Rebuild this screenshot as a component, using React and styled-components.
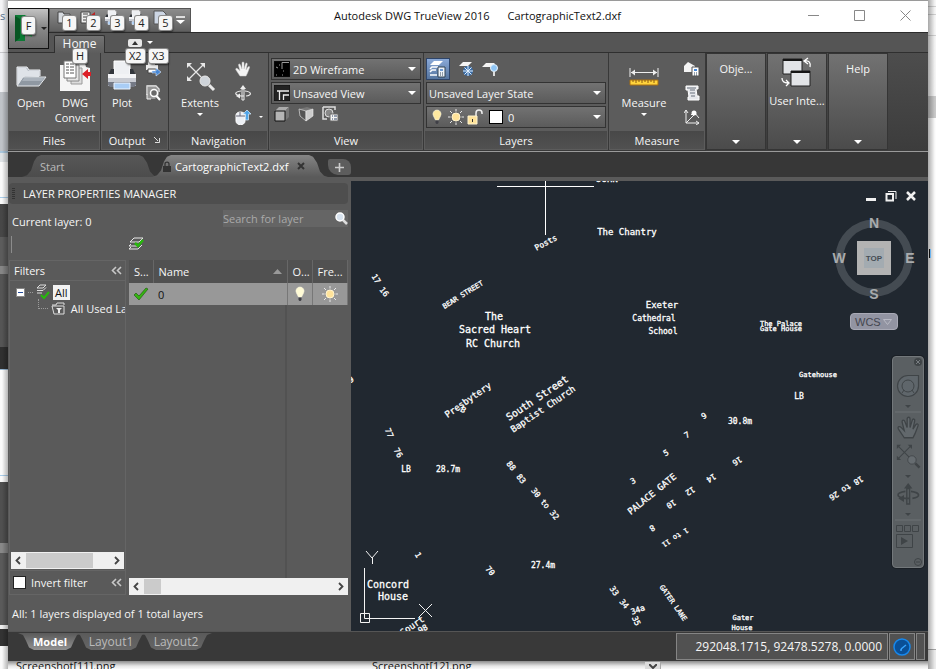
import React from "react";
import styled, { createGlobalStyle, css } from "styled-components";

const Global = createGlobalStyle`
  *, *::before, *::after { box-sizing: border-box; }
  body { margin: 0; background: #f3f3f3; overflow: hidden; }
  body, button, input, select, table { font: 11px/15px "Open Sans", "Noto Sans", sans-serif; color: #f6f6f6; }
  button { background: none; border: 0; padding: 0; }
  svg { display: block; flex: none; }
`;

/* ---------- desktop behind the window ---------- */
const Desktop = styled.div`
  display: grid;
  grid-template: 1fr 8px / 8px 1fr 8px;
  height: 100vh;
`;
const LeftDesk = styled.div`
  grid-row: 1 / 3;
  overflow: hidden;
  padding-top: 8px;
  color: #56708c;
  background:
    linear-gradient(90deg, transparent 2px, rgba(0, 0, 0, 0.28)),
    linear-gradient(#f4f4f6 0 52px, #c8c8cc 52px 53px, #f0f1f4 53px 92px, #bfc3c8 92px 151px, #a9c6dc 151px 153px, #dfe3e6 153px 162px, #fafafa 162px 197px, #a9cdea 197px 198px, #fafafa 198px 204px, #474747 204px 237px, #5c5c5c 237px 266px, #868686 266px 274px, #555 274px 347px, #303030 347px 369px, #98b8d4 369px 370px, #fafafa 370px 475px, #a9cdea 475px 476px, #fafafa 476px 482px, #505050 482px 543px, #888 543px 553px, #5a5a5a 553px 625px, #eee 625px 629px, #333 629px 646px, #fafafa 646px);
`;
const RightDesk = styled.div`
  grid-area: 1 / 3 / 3 / 4;
  background:
    linear-gradient(90deg, rgba(0, 0, 0, 0.32), transparent 7px),
    linear-gradient(#f6f6f6 0 6px, #cfcfcf 6px 7px, #f6f6f6 7px 14px, #cfcfcf 14px 15px, #f6f6f6 15px 35px, #d0d0d0 35px 36px, #f5f5f5 36px 96px, #c9c9c9 96px 118px, #fcfcfc 118px 649px, #a5a5a5 649px 650px, #ececec 650px);
`;
const Caret = styled.div`
  width: 2px;
  height: 9px;
  margin: 249px 0 0 1px;
  background: linear-gradient(90deg, #111 1px, #6db4ee 1px);
`;
const BottomDesk = styled.div`
  grid-area: 2 / 2;
  display: grid;
  grid-template-columns: 356px 281px 16px 1fr;
  align-items: end;
  overflow: hidden;
  height: 8px;
  color: #111;
  background: linear-gradient(#8c8c8c, #e6e6e6 5px, #fafafa);
  span { padding-left: 8px; line-height: 9px; }
`;
const DeskScroll = styled.div`
  display: grid;
  place-items: center;
  height: 8px;
  background: #dcdcdc;
  border-right: 1px solid #a8a8a8;
`;

/* ---------- window frame ---------- */
const Window = styled.main`
  position: relative;
  display: grid;
  grid-template-rows: 33px 20px 99px 25px 4px minmax(0, 1fr) 30px;
  min-width: 0;
  min-height: 0;
  background: #5a5a5a;
`;
const TitleBar = styled.header`
  display: flex;
  align-items: stretch;
  color: #111;
  background: #fff;
  border-top: 1px solid #9a9a9a;
  border-bottom: 1px solid #2c2c2c;
`;
const Quick = styled.nav`
  display: flex;
  align-items: center;
  width: 142px;
  height: 24px;
  margin: 7px 0 0 41px;
  padding-left: 6px;
  border: 1px solid #555;
  background: linear-gradient(#8c8c8c, #606060);
`;
const QuickButton = styled.button`
  position: relative;
  width: 24px;
  height: 20px;
  display: grid;
  place-items: start;
`;
const Title = styled.h1`
  flex: 1;
  display: flex;
  justify-content: center;
  gap: 18px;
  margin: 0;
  padding: 7px 26px 0 0;
  font: inherit;
  color: #111;
  white-space: nowrap;
`;
const Control = styled.button`
  width: 46px;
  height: 28px;
  display: grid;
  place-items: center;
`;
const AppButton = styled.button`
  position: absolute;
  left: 0;
  top: 8px;
  width: 41px;
  height: 41px;
  display: flex;
  align-items: center;
  gap: 3px;
  padding-left: 6px;
  border: 1px solid #111;
  background: linear-gradient(#c2c2c2, #8a8a8a 45%, #6b6b6b);
  z-index: 2;
`;
const KeyTip = styled.kbd`
  position: absolute;
  left: ${(p) => p.$x}px;
  top: ${(p) => p.$y}px;
  min-width: 13px;
  height: ${(p) => (p.$tall ? 17 : 14)}px;
  padding: 0 3px;
  display: grid;
  place-items: center;
  font: 11px/12px "Open Sans", sans-serif;
  color: #222;
  background: #f6f6f6;
  border-radius: 2px;
  box-shadow: 0 0 0 1px #8b8b8b, 1px 2px 2px rgba(0, 0, 0, 0.6);
  z-index: 3;
`;
const TabRow = styled.nav`
  display: flex;
  align-items: flex-end;
  padding-left: 46px;
  background: #555;
  border-bottom: 1px solid #2f2f2f;
`;
const HomeTab = styled.button`
  position: relative;
  width: 51px;
  height: 18px;
  margin-bottom: -1px;
  padding-bottom: 2px;
  border: 1px solid #303030;
  border-bottom: 0;
  border-radius: 2px 2px 0 0;
  font-size: 12px;
  background: linear-gradient(#737373, #5d5d5d);
`;
const MiniTools = styled.div`
  position: relative;
  display: flex;
  align-items: center;
  gap: 5px;
  margin-left: 23px;
  height: 19px;
`;
const MiniButton = styled.button`
  width: 14px;
  height: 8px;
  display: grid;
  place-items: center;
  border-radius: 2px;
  background: #e8e8e8;
`;

/* ---------- ribbon ---------- */
const Ribbon = styled.div`
  display: flex;
  align-items: stretch;
  background: linear-gradient(#4d4d4d, #3c3c3c);
  border-bottom: 1px solid #9a9a9a;
`;
const Panel = styled.section`
  flex: none;
  display: grid;
  grid-template-rows: 1fr 18px;
  width: ${(p) => p.$w}px;
  padding: 0 1px 1px;
  border-right: 1px solid #383838;
  border-bottom: 1px solid #383838;
  background: #5c5c5c;
`;
const PanelBody = styled.div`
  display: flex;
  min-height: 0;
  padding: ${(p) => p.$pad || "5px 3px 0"};
  gap: ${(p) => p.$gap || 0}px;
`;
const PanelTitle = styled.h2`
  position: relative;
  margin: 0;
  display: flex;
  justify-content: center;
  align-items: center;
  gap: 9px;
  font: inherit;
  color: #f6f6f6;
  background: linear-gradient(#484848, #515151);
`;
const BigButton = styled.button`
  display: flex;
  flex-direction: column;
  align-items: center;
  width: ${(p) => p.$w}px;
  svg:first-child { margin-bottom: 3px; }
  svg:last-child:not(:first-child) { margin-top: 3px; }
`;
const Stack = styled.div`
  display: flex;
  flex-direction: column;
  gap: 8px;
  padding-top: 1px;
`;
const SmallRow = styled.div`
  display: flex;
  align-items: center;
  gap: 8px;
  padding-left: ${(p) => p.$indent || 0}px;
`;
const IconButton = styled.button`
  display: grid;
  place-items: center;
  ${(p) => p.$on && css`
    width: 24px;
    height: 22px;
    border: 1px solid #2e4468;
    background: linear-gradient(#8aa9d8, #56759f);
  `}
`;
const Controls = styled.div`
  flex: 1;
  min-width: 0;
  display: flex;
  flex-direction: column;
  gap: 2px;
`;
const Combo = styled.label`
  display: flex;
  align-items: center;
  gap: 3px;
  height: 22px;
  padding: 0 4px 0 2px;
  border: 1px solid #333;
  background: linear-gradient(#727272, #5b5b5b);
  select {
    flex: 1;
    min-width: 0;
    height: 20px;
    padding: 0;
    border: 0;
    appearance: none;
    background: none;
  }
`;
const Swatch = styled.span`
  width: 14px;
  height: 14px;
  margin: 0 2px 0 3px;
  background: #fff;
  border: 1px solid #000;
`;
const FoldedPanel = styled.button`
  flex: none;
  display: flex;
  flex-direction: column;
  align-items: center;
  justify-content: space-between;
  width: 60px;
  margin: 0 1px 1px 0;
  padding: 3px 0 5px;
  border: 1px solid #353535;
  background: linear-gradient(#727272, #4b4b4b);
  white-space: nowrap;
`;
const FoldedLabel = styled.span`
  display: flex;
  flex-direction: column;
  align-items: center;
  gap: 4px;
  padding-top: ${(p) => p.$top || 0}px;
`;

/* ---------- document tabs ---------- */
const DocTabs = styled.nav`
  display: flex;
  align-items: flex-end;
  padding-left: 14px;
  background: #373737;
`;
const DocTab = styled.button`
  display: flex;
  align-items: center;
  gap: 4px;
  height: 22px;
  width: ${(p) => p.$w}px;
  padding-left: ${(p) => (p.$active ? 11 : 18)}px;
  margin-right: -6px;
  color: ${(p) => (p.$active ? "#fff" : "#bbb")};
  background: ${(p) => (p.$active ? "linear-gradient(#858585, #5a5a5a)" : "linear-gradient(#575757, #4c4c4c)")};
  clip-path: polygon(0 100%, 5px 92%, 9px 70%, 12px 30%, 15px 8%, 19px 0, calc(100% - 19px) 0, calc(100% - 15px) 8%, calc(100% - 11px) 35%, calc(100% - 8px) 75%, calc(100% - 4px) 94%, 100% 100%);
  white-space: nowrap;
`;
const NewTab = styled.button`
  display: grid;
  place-items: center;
  width: 23px;
  height: 16px;
  margin: 0 0 2px 6px;
  border-radius: 2px 8px 3px 10px;
  background: #5d5d5d;
`;

/* ---------- layer palette ---------- */
const Work = styled.div`
  grid-row: 6;
  display: grid;
  grid-template-columns: 343px minmax(0, 1fr);
  min-height: 0;
`;
const Palette = styled.aside`
  display: flex;
  flex-direction: column;
  min-height: 0;
  padding: 2px 3px 2px 1px;
`;
const PaletteTitle = styled.h2`
  display: flex;
  align-items: center;
  gap: 8px;
  height: 21px;
  margin: 0 0 6px;
  padding-left: 3px;
  font: inherit;
  color: #f6f6f6;
  background: #4e4e4e;
  border-radius: 4px;
  white-space: nowrap;
`;
const Grip = styled.span`
  width: 3px;
  height: 11px;
  background: repeating-linear-gradient(#333 0 1px, transparent 1px 2px);
`;
const Between = styled.div`
  display: flex;
  justify-content: space-between;
  align-items: flex-start;
  padding-left: 3px;
`;
const Current = styled.span`
  padding-top: 4px;
`;
const Search = styled.label`
  display: flex;
  align-items: center;
  width: 125px;
  height: 17px;
  background: #656565;
  input {
    flex: 1;
    min-width: 0;
    height: 17px;
    padding: 0;
    border: 0;
    outline: 0;
    background: none;
    &::placeholder { color: #a9a9a9; opacity: 1; }
  }
`;
const PaletteTools = styled.div`
  display: flex;
  align-items: center;
  height: 17px;
  margin: 7px 0 7px 2px;
  padding-left: 116px;
  border-left: 1px solid #8c8c8c;
`;
const Split = styled.div`
  flex: 1;
  display: grid;
  grid-template-columns: 117px minmax(0, 1fr);
  gap: 3px;
  min-height: 0;
`;
const Filters = styled.section`
  display: flex;
  flex-direction: column;
  min-width: 0;
  border: 1px solid #656565;
`;
const FiltersHead = styled.header`
  display: flex;
  justify-content: space-between;
  align-items: center;
  height: 20px;
  padding: 0 3px 0 4px;
  border-bottom: 1px solid #656565;
`;
const Tree = styled.ul`
  flex: 1;
  margin: 0;
  padding: 3px 0 0 6px;
  list-style: none;
  overflow: hidden;
  white-space: nowrap;
`;
const TreeItem = styled.li`
  display: flex;
  align-items: center;
  gap: 3px;
  height: 16px;
  padding-left: ${(p) => p.$indent || 0}px;
`;
const Dots = styled.span`
  flex: none;
  width: ${(p) => p.$w}px;
  height: ${(p) => p.$h || 1}px;
  border-bottom: 1px dotted #9a9a9a;
  ${(p) => p.$h && "border-left: 1px dotted #9a9a9a; margin-bottom: 9px;"}
`;
const Picked = styled.span`
  padding: 0 2px;
  color: #111;
  background: #f2f2f2;
`;
const FilterFoot = styled.label`
  display: flex;
  align-items: center;
  gap: 5px;
  height: 24px;
  padding: 0 3px;
  border-top: 1px solid #656565;
  input {
    width: 13px;
    height: 13px;
    margin: 0;
    appearance: none;
    background: #fff;
    border: 1px solid #222;
  }
  svg { margin-left: auto; }
`;
const Scroll = styled.div`
  display: flex;
  align-items: center;
  justify-content: space-between;
  height: 17px;
  padding: 0 4px;
  margin: ${(p) => p.$m || 0};
  background: #f0f0f0;
`;
const Thumb = styled.span`
  width: ${(p) => p.$w}px;
  height: 15px;
  margin: 0 auto 0 5px;
  background: #cbcbcb;
`;
const Layers = styled.section`
  display: flex;
  flex-direction: column;
  min-width: 0;
`;
const LayerTable = styled.table`
  width: 100%;
  border-collapse: collapse;
  table-layout: fixed;
  flex: none;
  th {
    height: 23px;
    padding: 0 5px;
    text-align: left;
    font-weight: 400;
    white-space: nowrap;
    background: #515151;
    border-right: 1px solid #676767;
  }
  td {
    height: 22px;
    padding: 0 5px;
    color: #111;
    background: #989898;
  }
  td:nth-child(n + 2) { border-right: 1px solid #777; }
`;
const HeadFlex = styled.span`
  display: flex;
  justify-content: space-between;
  align-items: center;
`;
const Center = styled.span`
  display: grid;
  place-items: center;
  margin: 0 -4px;
`;
const TableRest = styled.div`
  flex: 1;
  display: grid;
  grid-template-columns: 158px 1fr;
  span:first-child { border-right: 2px solid #525252; }
`;
const Summary = styled.p`
  margin: 11px 0 8px 3px;
`;

/* ---------- drawing area ---------- */
const Canvas = styled.section`
  position: relative;
  overflow: hidden;
  background: #212830;
`;
const Map = styled.svg`
  width: 100%;
  height: 100%;
  text {
    font-family: "DejaVu Sans Mono", "Liberation Mono", monospace;
    fill: #fff;
    stroke: #fff;
    stroke-width: 0.3px;
    text-anchor: middle;
    dominant-baseline: central;
  }
`;
const ViewControls = styled.div`
  position: absolute;
  top: 9px;
  right: 11px;
  display: flex;
  gap: 8px;
`;
const Cube = styled.div`
  position: absolute;
  top: 34px;
  right: 12px;
`;
const Wcs = styled.button`
  position: absolute;
  top: 132px;
  right: 30px;
  display: flex;
  align-items: center;
  justify-content: space-between;
  width: 48px;
  height: 17px;
  padding: 0 5px 0 4px;
  font: 11px/14px "Liberation Sans", Arial, sans-serif;
  color: #44464f;
  background: #9294a2;
  border: 1px solid #a9aab6;
  border-radius: 4px;
`;
const NavBar = styled.nav`
  position: absolute;
  top: 175px;
  right: 4px;
  width: 32px;
  border: 1px solid #73787b;
  border-radius: 4px;
  background: #5a5f62;
  box-shadow: 0 0 0 1px #1a1f25;
`;

/* ---------- status bar ---------- */
const Status = styled.footer`
  grid-row: 7;
  display: flex;
  justify-content: space-between;
  padding: 1px 3px 1px 10px;
  background: #393939;
  border-top: 1px solid #555;
`;
const LayoutTabs = styled.div`
  display: flex;
  align-items: flex-start;
`;
const LayoutTab = styled.button`
  height: 17px;
  width: ${(p) => p.$w}px;
  margin-right: -7px;
  font-size: ${(p) => (p.$active ? 11 : 12)}px;
  font-weight: ${(p) => (p.$active ? 700 : 400)};
  color: ${(p) => (p.$active ? "#fff" : "#bbb")};
  background: ${(p) => (p.$active ? "linear-gradient(#5a5a5a, #929292)" : "linear-gradient(#5a5a5a, #666)")};
  clip-path: polygon(0 0, 5px 12%, 8px 45%, 11px 85%, 16px 100%, calc(100% - 16px) 100%, calc(100% - 11px) 85%, calc(100% - 8px) 45%, calc(100% - 5px) 12%, 100% 0);
`;
const StatusCells = styled.div`
  display: flex;
  gap: 1px;
`;
const Cell = styled.div`
  display: flex;
  align-items: center;
  justify-content: ${(p) => (p.$end ? "flex-end" : "center")};
  width: ${(p) => p.$w}px;
  padding-right: ${(p) => (p.$end ? 5 : 0)}px;
  font-size: 12px;
  background: #515151;
  border: 1px solid #858585;
`;

/* ---------- icons ---------- */
const Svg = ({ w, h = w, children, ...rest }) => (
  <svg width={w} height={h} viewBox={`0 0 ${w} ${h}`} fill="none" aria-hidden="true" {...rest}>{children}</svg>
);
const Down = ({ w = 8, color = "#fff" }) => (
  <Svg w={w} h={w / 2}><path d={`M0 0H${w}L${w / 2} ${w / 2}Z`} fill={color} /></Svg>
);
const Chevrons = () => (
  <Svg w={11} h={9}><path d="M5 1 1.5 4.5 5 8M10 1 6.500 4.500 10 8" stroke="#c8c8c8" strokeWidth="1.600" /></Svg>
);
const Chev = ({ right }) => (
  <Svg w={6} h={9}><path d={right ? "M1 1 4.5 4.500 1 8" : "M5 1 1.5 4.5 5 8"} stroke="#444" strokeWidth="1.800" /></Svg>
);
const Folder = () => (
  <Svg w={32}>
    <path d="M2 25V7h10l2 3h11v6" fill="#b9bfc7" stroke="#eef0f3" />
    <path d="M3 8h8l2 3h11v6L10 16 3 25Z" fill="#dfe3e8" />
    <path d="M8 17h23l-7 9H2Z" fill="#8f98a2" stroke="#e6e9ec" />
    <path d="m9 18 20 0-2 3H7Z" fill="#aab2bb" />
  </Svg>
);
const Convert = () => (
  <Svg w={32}>
    <path d="M1 5h4l1-2h20l1 4 4 1v23H1Z" fill="#f5f5f5" />
    <path d="M12 8h11v16H12Z" fill="#ddd" stroke="#999" />
    <path d="M8 5h12v16H8Z" fill="#e7e7e7" stroke="#888" />
    <path d="M5 1h12v17H5Z" fill="#fff" stroke="#777" />
    <path d="M7 4h3m1 0h4M7 7h3m1 0h4M7 10h3m1 0h4M7 13h3m1 0h4" stroke="#555" />
    <path d="M23 14l6-5v3h3v4h-3v3Z" fill="#dc2028" />
  </Svg>
);
const Printer = ({ w = 32 }) => (
  <svg width={w} height={w} viewBox="0 0 32 32" fill="none" aria-hidden="true">
    <path d="m8 1 14 0 2 2v12H8Z" fill="#eef0f3" stroke="#fff" />
    <path d="M5 9h3v5h16V9h3l3 7H2Z" fill="#32363c" />
    <path d="M2 14h28v12H2Z" fill="#c9ccd3" />
    <path d="M2 14h28v4H2Z" fill="#f3f4f6" />
    <path d="M2 22h28v3l-2 2H4l-2-2Z" fill="#747985" />
    <path d="M8 23h16v6H8Z" fill="#a9cdf5" stroke="#eef6ff" />
  </svg>
);
const PrintArrow = () => (
  <Svg w={16}>
    <path d="M3 4V1h7v3" fill="#ddd" /><path d="M1 4h12v5H1Z" fill="#ececec" /><path d="M3 8h8v4H3Z" fill="#fff" stroke="#444" />
    <path d="M7 10h4V7l5 4-5 4v-3H7Z" fill="#4787d4" stroke="#dcebff" strokeWidth=".6" />
  </Svg>
);
const Preview = () => (
  <Svg w={16}>
    <path d="M2 10V1h9l3 3v3" stroke="#f2f2f2" strokeWidth="1.300" /><path d="M2 1h9l3 3v6l-4 4H2Z" fill="#bdbdbd" fillOpacity=".6" />
    <path d="M2 9v5h4" stroke="#f2f2f2" />
    <circle cx="9" cy="8" r="3.500" fill="#6a6a6a" stroke="#fff" strokeWidth="1.500" /><path d="m11.500 11 3.500 4" stroke="#fff" strokeWidth="2" />
  </Svg>
);
const ExtentsShape = ({ c = "#e8e8e8", glass = "#cfd4da" }) => (
  <>
    <path d="M2 2 18 18M18 2 2 18" stroke={c} strokeWidth="1.200" />
    <path d="M1 1h5L1 6ZM19 1v5l-5-5ZM1 19v-5l5 5Z" fill={c} />
    <path d="m23 23 5 5" stroke={c} strokeWidth="3" />
    <circle cx="19" cy="19" r="5" fill={glass} stroke={c} />
  </>
);
const Extents = () => <Svg w={32}><g transform="translate(2 2)"><ExtentsShape /></g></Svg>;
const handPath = "M5 15 1 9c-1-2 1-2 2-1l2 2-1.500-6c0-1.500 1.500-1.500 2 0L7 8V2c0-1.500 2-1.500 2 0v6l1.500-5c.5-1.500 2-1 1.700.3L11 9l2-3c.8-1 2-.5 1.500.8L12.500 12 11 15Z";
const Hand = () => <Svg w={16}><path d={handPath} fill="#f4f4f4" stroke="#ccc" strokeWidth=".5" /></Svg>;
const orbit = (c) => (
  <>
    <path d="M7 4h2v11H7Z" stroke={c} /><path d="m5 4 3-4 3 4Z" fill={c} />
    <path d="M6 6c-7 1-7 4 0 5h3M10 6c7 1 7 4 1 5" stroke={c} strokeWidth="1.200" /><path d="M5 8.500v5l-4-2.500Z" fill={c} />
  </>
);
const Orbit = () => <Svg w={16}>{orbit("#eee")}</Svg>;
const Mouse = () => (
  <Svg w={16}>
    <path d="M1 6c0-4 9-4 9 0v6c0 5-9 5-9 0Z" fill="#eceff4" stroke="#fff" /><path d="M1 7h9M5 3v4" stroke="#667" />
    <path d="m12 1 4 4h-2.500v6h-3V5H8Z" fill="#4fa4e8" stroke="#d6ecff" strokeWidth=".7" />
  </Svg>
);
const ViewTile = ({ wire }) => (
  <Svg w={16}>
    <path d="M0 0h16v16H0Z" fill={wire ? "#000" : "#222"} stroke="#111" />
    {wire ? <path d="M8 8V1.500h7M2 6l2 1M2 14h1M8 14h1M9 10h1M5 4h1" stroke="#999" /> : <path d="M3 6h12M5.500 15V6M9.500 15v-5H15" stroke="#eee" strokeWidth="1.300" />}
  </Svg>
);
const BoxIcon = ({ persp }) => (
  <Svg w={16}>
    {persp ? (
      <><path d="m1 3 8-2 6 2-7 2Z" fill="#777" /><path d="m1 3 7 2v10l-6-5Z" fill="#555" stroke="#ddd" strokeWidth=".7" /><path d="m8 5 7-2v7l-7 5Z" fill="#ccc" stroke="#eee" strokeWidth=".6" /></>
    ) : (
      <><path d="m1 5 4-4h10l-4 4Z" fill="#aaa" /><path d="m11 5 4-4v10l-4 4Z" fill="#777" /><path d="M1 5h10v10H1Z" fill="#b5b5b5" stroke="#111" /></>
    )}
  </Svg>
);
const ViewList = () => (
  <Svg w={17} h={16}>
    <path d="M1 1h12v3M1 1v12h4" stroke="#ddd" strokeWidth="1.500" /><circle cx="7" cy="7" r="4" fill="#888" stroke="#ddd" />
    <path d="M8 8h8v7H8Z" fill="#f4f4f4" stroke="#666" /><path d="M10 10h1m1 0h3M10 13h1m1 0h3" stroke="#346" />
  </Svg>
);
const LayerProps = () => (
  <Svg w={18}>
    <path d="m1 5 4-4h9l-4 4Z" fill="#fff" /><path d="m1 9 2-2h6M1 12l2-2h4M1 15h7" stroke="#fff" strokeWidth="1.500" />
    <path d="M9 7h7v10H9Z" fill="#eef3fa" stroke="#345" /><path d="M11 9h3v2h-3Z" fill="#6e9bd4" /><path d="M11 13h1m1 0h1m-3 2h1m1 0h1" stroke="#345" />
  </Svg>
);
const LayerFreeze = () => (
  <Svg w={16}>
    <path d="m1 5 4-4h9l-4 4Z" fill="#f4f4f4" /><circle cx="10" cy="10" r="5" fill="#3c6ea8" /><path d="M10 5v10M5 10h10M6.500 6.500l7 7M13.500 6.500l-7 7" stroke="#e2f1ff" />
  </Svg>
);
const LayerOff = () => (
  <Svg w={16}>
    <path d="m0 6 4-4h9l-4 4Z" fill="#f4f4f4" /><circle cx="12" cy="7" r="3.500" fill="#8fc5f5" stroke="#e6f4ff" /><path d="M12 11v4" stroke="#ddd" strokeWidth="2" />
  </Svg>
);
const Bulb = ({ pale }) => (
  <Svg w={16}>
    <path d="M8 1a4 4 0 0 1 3.500 6L9.500 11h-3L4.500 7A4 4 0 0 1 8 1Z" fill={pale ? "#fffbd6" : "#ffe9a0"} stroke="#fffbe2" strokeWidth=".6" /><path d="M6.500 11.500h3V14l-1 1h-1l-1-1Z" fill="#3f3f46" />
  </Svg>
);
const Sun = () => (
  <Svg w={16}>
    <path d="M8 0v2.500M8 13.500V16M0 8h2.500M13.500 8H16M2 2l2 2M14 14l-2-2M14 2l-2 2M2 14l2-2" stroke="#e8e8e8" />
    <circle cx="8" cy="8" r="4" fill="#ffe39a" stroke="#fff4cf" />
  </Svg>
);
const OpenLock = () => (
  <Svg w={16}><path d="M9 8V4c0-4 6-4 6 0v1" stroke="#eee" strokeWidth="1.500" /><path d="M1 7h9v8H1Z" fill="#ffe39a" stroke="#fff4cf" /><path d="M5.500 10v3" stroke="#333" /></Svg>
);
const Ruler = () => (
  <Svg w={30} h={32}>
    <path d="M1 8v9M29 8v9M2 12.500h26" stroke="#eee" /><path d="m2 12.500 4-3v6ZM28 12.500l-4-3v6Z" fill="#eee" />
    <path d="M1 20h28v5H1Z" fill="#ffd33c" stroke="#a96e10" /><path d="M4 20v2m3-2v3m3-3v2m3-2v3m3-3v2m3-2v3m3-3v2m3-2v3" stroke="#8a5a10" />
  </Svg>
);
const MeasureCalc = () => (
  <Svg w={16}><path d="m0 5 4-4 7 4v6H0Z" fill="#f4f4f4" /><path d="M8 6h7v9H8Z" fill="#fff" stroke="#555" /><path d="M10 8h3v2h-3Z" fill="#4688d8" /><path d="M10 12h1m1 0h1m-3 2h1m1 0h1" stroke="#345" /></Svg>
);
const Scroller = () => (
  <Svg w={16}><path d="M2 1h12v3h-2l1 7h2v4H4v-3h1L4 5H2Z" fill="#e6e8ec" stroke="#fff" /><path d="M6 5h5M6 8h5M7 11h4M3 3h9" stroke="#68707c" /></Svg>
);
const Axis = () => (
  <Svg w={16}><path d="M2 1v13h13M2 14l8-8M7 6l3-3 5 6" stroke="#eee" /><path d="m0 4 2-3 2 3M12 12l3 2-3 2" stroke="#eee" /><circle cx="10" cy="4" r="2.500" fill="#fff" /></Svg>
);
const Windows = () => (
  <Svg w={32}>
    <path d="M2 2h19v15H2Z" fill="#e2e4e7" stroke="#222" /><path d="M2 2h19v2H2Z" fill="#151515" />
    <path d="M10 14h19v15H10Z" fill="#e2e4e7" stroke="#222" /><path d="M10 14h19v2H10Z" fill="#151515" />
    <path d="M24 4c4-1 6 2 5 6M27 1l-4 3 4 3M1 21c0 4 2 5 6 5M5 23l3 3-3 3" stroke="#fff" strokeWidth="1.300" />
  </Svg>
);
const LogoF = () => <Svg w={23} h={28}><path d="M0 0h10v26H0Z" fill="#0d7a35" /><path d="m0 1 5 3v19l-5 4Z" fill="#075522" /><path d="m10 0 7 4v18l-7-3Z" fill="#2f9c52" /></Svg>;
const Lock = () => <Svg w={8} h={11}><path d="M2 5V3c0-2.500 4-2.500 4 0v2" stroke="#333" strokeWidth="1.300" /><path d="M0 5h8v6H0Z" fill="#333" /></Svg>;
const Glass = () => <Svg w={13}><path d="m8 8 4 4" stroke="#ddd" strokeWidth="2.500" /><circle cx="5" cy="5" r="4" fill="#d7e2ee" stroke="#fff" strokeWidth="1.500" /></Svg>;
const Check = () => <Svg w={16}><path d="m1 9 2-2 3 3 7-8 2 1-9 11Z" fill="#35b512" stroke="#245e12" strokeWidth=".7" /></Svg>;
const LayerCheck = () => (
  <Svg w={17} h={15}><path d="m2 5 4-4h9l-4 4ZM1 9l2-2M1 9h9l4-4M1 12l2-2M1 12h9l4-4" stroke="#e8e8e8" /><path d="m7 6 3 3 5-6" stroke="#27b80c" strokeWidth="2.500" /></Svg>
);
const TreeLayers = () => <Svg w={14} h={16}><path d="m1 4 3-3h6L7 4ZM1 6.500h6l3-3M1 9h5" stroke="#ddd" /><path d="m5 11 3 3 5-6" stroke="#27b80c" strokeWidth="2" /></Svg>;
const FilterFolder = () => <Svg w={14} h={13}><path d="M1 3h4l1-2h7v2M1 4h12v8H3Z" stroke="#ddd" /><path d="M5 6h6L9 8v3H7V8Z" fill="#eee" /></Svg>;
const Minus = () => <Svg w={9}><path d="M.5.5h8v8h-8Z" fill="#fff" stroke="#888" /><path d="M2 4.500h5" stroke="#234a9a" /></Svg>;

const NavIcons = () => {
  const c = "#3f4447";
  return (
    <Svg w={30} h={210}>
      <circle cx="25" cy="5" r="4" fill={c} /><path d="m23 3 4 4m0-4-4 4" stroke="#777c80" />
      <path d="M15 18.500h10.500V29A10.500 10.500 0 1 1 15 18.500Z" stroke={c} fill="#5f666b" strokeWidth="1.200" /><circle cx="15" cy="29" r="6" stroke={c} /><path d="m9 36 2-3m10 3-2-3" stroke={c} />
      <path d="M12 48h6l-3 3Z" fill={c} /><path d="M2 55h26M2 163h26" stroke="#6d7275" />
      <g transform="translate(4 59) scale(1.450)"><path d={handPath} stroke={c} strokeWidth=".9" fill="#62686c" /></g>
      <g transform="translate(3 87) scale(.84)"><ExtentsShape c={c} glass="#666c70" /></g>
      <path d="M12 118h6l-3 3Z" fill={c} />
      <g transform="translate(4 126) scale(1.400)">{orbit(c)}</g>
      <path d="M12 156h6l-3 3Z" fill={c} />
      <path d="M3.500 168.500h6v6h-6ZM11.500 168.500h6v6h-6ZM19.500 168.500h6v6h-6ZM3.500 177.500h16v13h-16Z" stroke={c} /><path d="m8 180 7 4-7 4Z" fill={c} />
      <circle cx="25" cy="205" r="3.500" stroke={c} /><path d="M23 205h4" stroke={c} />
    </Svg>
  );
};
const Compass = () => (
  <svg width="84" height="88" viewBox="0 0 84 88" role="img" aria-label="View cube, top">
    <circle cx="42" cy="43" r="34.500" fill="none" stroke="#444b52" strokeWidth="8" />
    <path d="M25 26h34v34H25Z" fill="#b3b3b3" /><path d="M32 33h20v20H32Z" fill="#a3abb1" />
    <g fontFamily="Liberation Sans, Arial, sans-serif" fontWeight="700" textAnchor="middle" fill="#a9abad">
      <text x="42" y="13" fontSize="14">N</text><text x="42" y="84" fontSize="14">S</text>
      <text x="7" y="48" fontSize="14">W</text><text x="78" y="48" fontSize="14">E</text>
      <text x="42" y="46" fontSize="8" fill="#454d55">TOP</text>
    </g>
  </svg>
);

/* label, centre x, centre y, rotation, size */
const labels = [
  ["JOHN", 256, -2, 0, 9], ["The Chantry", 276, 51, 0, 9], ["Posts", 195, 62, -28, 8],
  ["17", 25, 98, 58, 8], ["16", 33, 111, 52, 8], ["BEAR STREET", 112, 114, -32, 7],
  ["The", 143, 135, 0, 10], ["Sacred Heart", 144, 148, 0, 10], ["RC Church", 142, 162, 0, 10],
  ["Exeter", 311, 124, 0, 9], ["Cathedral", 303, 137, 0, 8], ["School", 312, 150, 0, 8],
  ["The Palace", 430, 143, 0, 7], ["Gate House", 430, 148, 0, 7], ["Gatehouse", 467, 194, 0, 7],
  ["LB", 448, 215, 0, 8], ["9", 0, 199, -30, 8], ["Presbytery", 117, 219, -35, 9], ["B", 112, 229, 30, 8],
  ["South Street", 186, 217, -34, 10], ["Baptist Church", 192, 228, -34, 9],
  ["77", 38, 252, 68, 8], ["76", 47, 272, 60, 8], ["LB", 55, 288, 0, 8], ["28.7m", 97, 288, 0, 8],
  ["88", 160, 285, 52, 8], ["83", 170, 298, 52, 8], ["30 to 32", 194, 323, 50, 8],
  ["9", 353, 235, -30, 8], ["30.8m", 389, 240, 0, 8], ["7", 336, 254, -30, 8], ["5", 315, 272, -30, 8],
  ["3", 282, 300, -30, 8], ["PALACE GATE", 301, 313, -39, 9], ["16", 386, 280, 148, 8],
  ["14", 360, 297, 148, 8], ["12", 339, 310, 148, 8], ["10", 320, 323, 148, 8], ["8", 301, 347, 148, 8],
  ["1 to 11", 324, 356, 148, 7], ["18 to 26", 495, 307, 148, 8], ["1", 67, 374, 60, 8],
  ["70", 139, 390, 50, 8], ["27.4m", 192, 384, 0, 8], ["Concord", 37, 403, 0, 10], ["House", 42, 415, 0, 10],
  ["Court", 61, 445, -35, 9], ["98", 72, 448, -30, 8], ["33", 263, 410, 55, 8], ["34", 273, 423, 50, 8],
  ["34a", 287, 429, -20, 8], ["35", 285, 440, 65, 8], ["GATER LANE", 322, 422, 55, 7],
  ["Gater", 392, 437, 0, 7], ["House", 391, 447, 0, 7],
];

const quick = [
  ["Open", <Svg w={16} key="a"><path d="M2 13V2h5l1 2h6v9Z" fill="#d5d9de" stroke="#444" /></Svg>],
  ["DWG Convert", <Svg w={16} key="b"><path d="M1 2h9v11H1Z" fill="#eee" stroke="#444" /><path d="M3 4h5M3 7h5M3 10h5" stroke="#444" /><path d="m11 5 4-3v5Z" fill="#b22" /></Svg>],
  ["Plot", <Printer w={16} key="c" />],
  ["Batch Plot", <Printer w={16} key="d" />],
  ["Plot Preview", <Svg w={16} key="e"><path d="M2 1h9l3 3v10H2Z" fill="#cdd6e4" stroke="#555" /></Svg>],
];

const FoldedSection = ({ label, icon }) => (
  <FoldedPanel>
    <FoldedLabel $top={icon ? 0 : 4}>{icon}{label}</FoldedLabel>
    <Down />
  </FoldedPanel>
);

export default function App() {
  return (
    <Desktop>
      <Global />
      <LeftDesk>s</LeftDesk>
      <Window>
        <TitleBar>
          <Quick aria-label="Quick access">
            {quick.map(([name, icon], i) => (
              <QuickButton key={name} aria-label={name}>{icon}<KeyTip $x={7} $y={6}>{i + 1}</KeyTip></QuickButton>
            ))}
            <button aria-label="Customize quick access">
              <Svg w={9} h={8}><path d="M0 1h9" stroke="#fff" strokeWidth="1.500" /><path d="M0 4h9L4.500 8Z" fill="#fff" /></Svg>
            </button>
          </Quick>
          <Title><span>Autodesk DWG TrueView 2016</span><span>CartographicText2.dxf</span></Title>
          <Control aria-label="Minimize"><Svg w={11}><path d="M0 5.500h11" stroke="#888" /></Svg></Control>
          <Control aria-label="Maximize"><Svg w={11}><path d="M.5.5h10v10H.5Z" stroke="#888" /></Svg></Control>
          <Control aria-label="Close"><Svg w={11}><path d="m.5.5 10 10m0-10-10 10" stroke="#888" /></Svg></Control>
        </TitleBar>
        <AppButton aria-label="Application menu"><LogoF /><Down w={6} color="#222" /><KeyTip $x={13} $y={8} $tall>F</KeyTip></AppButton>

        <TabRow>
          <HomeTab>Home<KeyTip $x={18} $y={13}>H</KeyTip></HomeTab>
          <MiniTools>
            <MiniButton aria-label="Minimize ribbon"><Svg w={6} h={4}><path d="m0 4 3-4 3 4Z" fill="#333" /></Svg></MiniButton>
            <button aria-label="Ribbon options"><Down w={6} /></button>
            <KeyTip $x={-2} $y={16}>X2</KeyTip><KeyTip $x={21} $y={16}>X3</KeyTip>
          </MiniTools>
        </TabRow>

        <Ribbon>
          <Panel $w={93}>
            <PanelBody $pad="7px 0 0">
              <BigButton $w={44}><Folder />Open</BigButton>
              <BigButton $w={44}><Convert /><span>DWG<br />Convert</span></BigButton>
            </PanelBody>
            <PanelTitle>Files</PanelTitle>
          </Panel>
          <Panel $w={68}>
            <PanelBody $pad="7px 0 0 1px" $gap={4}>
              <BigButton $w={38}><Printer />Plot</BigButton>
              <Stack>
                <IconButton aria-label="Batch plot"><PrintArrow /></IconButton>
                <IconButton aria-label="Preview"><Preview /></IconButton>
              </Stack>
            </PanelBody>
            <PanelTitle>Output<Svg w={6}><path d="m0 0 4 4M5.500 1v4.500H1" stroke="#ddd" /></Svg></PanelTitle>
          </Panel>
          <Panel $w={100}>
            <PanelBody $pad="7px 0 0 5px" $gap={10}>
              <BigButton $w={50}><Extents />Extents<Down w={6} /></BigButton>
              <Stack>
                <SmallRow><IconButton aria-label="Pan"><Hand /></IconButton></SmallRow>
                <SmallRow><IconButton aria-label="Orbit"><Orbit /></IconButton></SmallRow>
                <SmallRow><IconButton aria-label="Wheel"><Mouse /></IconButton><Down w={4} /></SmallRow>
              </Stack>
            </PanelBody>
            <PanelTitle>Navigation</PanelTitle>
          </Panel>
          <Panel $w={155}>
            <PanelBody $pad="5px 1px 0">
              <Controls>
                <Combo><ViewTile wire /><select aria-label="Visual style"><option>2D Wireframe</option></select><Down /></Combo>
                <Combo><ViewTile /><select aria-label="View"><option>Unsaved View</option></select><Down /></Combo>
                <SmallRow $indent={3}>
                  <IconButton aria-label="Parallel"><BoxIcon /></IconButton>
                  <IconButton aria-label="Perspective"><BoxIcon persp /></IconButton>
                  <IconButton aria-label="View manager"><ViewList /></IconButton>
                </SmallRow>
              </Controls>
            </PanelBody>
            <PanelTitle>View</PanelTitle>
          </Panel>
          <Panel $w={185}>
            <PanelBody $pad="5px 1px 0">
              <Controls>
                <SmallRow>
                  <IconButton $on aria-label="Layer properties"><LayerProps /></IconButton>
                  <IconButton aria-label="Freeze"><LayerFreeze /></IconButton>
                  <IconButton aria-label="Off"><LayerOff /></IconButton>
                </SmallRow>
                <Combo><select aria-label="Layer state"><option>Unsaved Layer State</option></select><Down /></Combo>
                <Combo><Bulb /><Sun /><OpenLock /><Swatch /><select aria-label="Layer"><option>0</option></select><Down /></Combo>
              </Controls>
            </PanelBody>
            <PanelTitle>Layers</PanelTitle>
          </Panel>
          <Panel $w={97}>
            <PanelBody $pad="7px 0 0 8px" $gap={14}>
              <BigButton $w={52}><Ruler />Measure<Down w={6} /></BigButton>
              <Stack>
                <IconButton aria-label="Calculator"><MeasureCalc /></IconButton>
                <IconButton aria-label="List"><Scroller /></IconButton>
                <IconButton aria-label="Locate point"><Axis /></IconButton>
              </Stack>
            </PanelBody>
            <PanelTitle>Measure</PanelTitle>
          </Panel>
          <FoldedSection label="Obje..." />
          <FoldedSection label="User Inte..." icon={<Windows />} />
          <FoldedSection label="Help" />
        </Ribbon>

        <DocTabs>
          <DocTab $w={136}>Start</DocTab>
          <DocTab $w={176} $active><Lock />CartographicText2.dxf<Svg w={14} h={8}><path d="m6 1 6 6m0-6-6 6" stroke="#333" strokeWidth="2" /></Svg></DocTab>
          <NewTab aria-label="New tab"><Svg w={9}><path d="M4.500 0v9M0 4.500h9" stroke="#ccc" strokeWidth="1.600" /></Svg></NewTab>
        </DocTabs>

        <Work>
          <Palette>
            <PaletteTitle><Grip />LAYER PROPERTIES MANAGER</PaletteTitle>
            <Between>
              <Current>Current layer: 0</Current>
              <Search><input placeholder="Search for layer" aria-label="Search for layer" /><Glass /></Search>
            </Between>
            <PaletteTools><IconButton aria-label="Set current"><LayerCheck /></IconButton></PaletteTools>
            <Split>
              <Filters>
                <FiltersHead>Filters<Chevrons /></FiltersHead>
                <Tree>
                  <TreeItem><Minus /><Dots $w={5} /><TreeLayers /><Picked>All</Picked></TreeItem>
                  <TreeItem $indent={22}><Dots $w={10} $h={10} /><FilterFolder /><span>&nbsp;All Used Layers</span></TreeItem>
                </Tree>
                <Scroll $m="0 1px 1px"><Chev /><Thumb $w={67} /><Chev right /></Scroll>
                <FilterFoot><input type="checkbox" />Invert filter<Chevrons /></FilterFoot>
              </Filters>
              <Layers>
                <LayerTable>
                  <colgroup><col width="24" /><col width="134" /><col width="25" /><col /></colgroup>
                  <thead><tr><th>S...</th><th><HeadFlex>Name<Svg w={9} h={5}><path d="M0 5 4.500 0 9 5Z" fill="#999" /></Svg></HeadFlex></th><th>O...</th><th>Fre...</th></tr></thead>
                  <tbody><tr><td><Center><Check /></Center></td><td>0</td><td><Center><Bulb pale /></Center></td><td><Center><Sun /></Center></td></tr></tbody>
                </LayerTable>
                <TableRest><span /><span /></TableRest>
                <Scroll><Chev /><Thumb $w={17} /><Chev right /></Scroll>
              </Layers>
            </Split>
            <Summary>All: 1 layers displayed of 1 total layers</Summary>
          </Palette>

          <Canvas>
            <Map aria-label="Drawing">
              <path d="M146 5.500h97M194.500 0v54" stroke="#fff" />
              {labels.map(([t, x, y, a, s], i) => (
                <text key={i} x={x} y={y} fontSize={s} transform={`rotate(${a} ${x} ${y})`}>{t}</text>
              ))}
              <path d="M13.500 387v50.500H64M9.500 432.500h9v9h-9ZM15 370l6 7 6-7M21.500 377v6M68 423l13 13M81 423l-13 13" stroke="#f4f4f4" fill="none" />
            </Map>
            <ViewControls>
              <button aria-label="Minimize view"><Svg w={12}><path d="M1 8h10v3H1Z" fill="#f0f0f0" /></Svg></button>
              <button aria-label="Restore view"><Svg w={12}><path d="M1.500 4h6.500v6.500H1.500Z" stroke="#f0f0f0" strokeWidth="2" /><path d="M3 1.500h8V9" stroke="#f0f0f0" /></Svg></button>
              <button aria-label="Close view"><Svg w={12}><path d="m2 2 8 8m0-8-8 8" stroke="#f0f0f0" strokeWidth="2.500" /></Svg></button>
            </ViewControls>
            <Cube><Compass /></Cube>
            <Wcs>WCS<Svg w={9} h={6}><path d="M.5.5h8l-4 5Z" stroke="#b8b9c4" /></Svg></Wcs>
            <NavBar aria-label="Navigation bar"><NavIcons /></NavBar>
          </Canvas>
        </Work>

        <Status>
          <LayoutTabs>
            <LayoutTab $w={64} $active>Model</LayoutTab>
            <LayoutTab $w={72}>Layout1</LayoutTab>
            <LayoutTab $w={72}>Layout2</LayoutTab>
          </LayoutTabs>
          <StatusCells>
            <Cell $w={212} $end>292048.1715, 92478.5278, 0.0000</Cell>
            <Cell $w={26}><Svg w={18}><circle cx="9" cy="9" r="8" fill="#0a4f96" stroke="#1688ee" strokeWidth="1.500" /><path d="m8 11 5-4M7 12h2" stroke="#38a4ff" strokeWidth="1.500" /></Svg></Cell>
            <Cell $w={9} />
          </StatusCells>
        </Status>
      </Window>
      <RightDesk><Caret /></RightDesk>
      <BottomDesk>
        <span>Screenshot[11].png</span><span>Screenshot[12].png</span>
        <DeskScroll><Svg w={8} h={5}><path d="m0 0 4 4 4-4" stroke="#444" strokeWidth="2" /></Svg></DeskScroll>
      </BottomDesk>
    </Desktop>
  );
}
